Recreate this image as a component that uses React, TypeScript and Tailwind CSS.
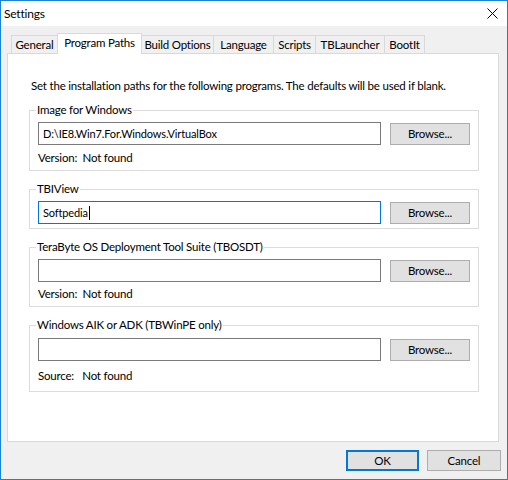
import React from 'react';

const tabs = [
  { label: 'General', w: 'w-[47px]' },
  { label: 'Program Paths', w: 'w-[85px]', active: true },
  { label: 'Build Options', w: 'w-[73px]' },
  { label: 'Language', w: 'w-[61px]' },
  { label: 'Scripts', w: 'w-[43px]' },
  { label: 'TBLauncher', w: 'w-[70px]' },
  { label: 'BootIt', w: 'w-[41px]' },
];

function BrowseButton() {
  return (
    <button className="mt-px ml-[9px] w-[80px] h-[22px] bg-[#e1e1e1] border border-[#adadad] text-black flex items-center justify-center">
      Browse...
    </button>
  );
}

function PathInput({ value, focused }: { value?: string; focused?: boolean }) {
  return (
    <div
      className={`w-[343px] h-[23px] bg-white border flex items-center pl-[4px] ${
        focused ? 'border-[#0078d7]' : 'border-[#7a7a7a]'
      }`}
    >
      <span className="text-[11px] tracking-[-0.15px]">{value}</span>
      {focused && <span className="inline-block w-px h-[14px] bg-black ml-px" />}
    </div>
  );
}

export default function App() {
  return (
    <div
      className="w-[508px] h-[480px] border border-[#1883d7] flex flex-col text-[11.5px] tracking-[-0.2px] leading-4 text-black bg-[#f0f0f0] whitespace-nowrap"
      style={{ fontFamily: 'Lato, "Segoe UI", sans-serif' }}
    >
      {/* title bar */}
      <div className="h-[25px] bg-white flex items-center justify-between pl-[3px] pr-[9px]">
        <span className="text-[12px]">Settings</span>
        <svg width="11" height="11" viewBox="0 0 11 11">
          <path d="M0.5 0.5 L10.5 10.5 M10.5 0.5 L0.5 10.5" stroke="#000" strokeWidth="1" />
        </svg>
      </div>

      <div className="flex-1 flex flex-col px-[6px] pt-[7px]">
        {/* tab strip */}
        <div className="flex items-end h-[20px] pl-[4px]">
          {tabs.map((t, i) =>
            t.active ? (
              <div
                key={t.label}
                className={`${t.w} -ml-px h-[21px] -mb-px relative z-10 bg-white border border-b-0 border-[#d9d9d9] flex items-center justify-center pb-[2px]`}
              >
                {t.label}
              </div>
            ) : (
              <div
                key={t.label}
                className={`${t.w} ${i > 0 ? '-ml-px' : ''} h-[18px] bg-[#f0f0f0] border border-b-0 border-[#d9d9d9] flex items-center justify-center`}
              >
                {t.label}
              </div>
            )
          )}
        </div>

        {/* tab panel */}
        <div className="w-[492px] h-[389px] bg-white border border-[#d9d9d9] pl-[21px] pt-[24px]">
          <p className="ml-[2px]">
            Set the installation paths for the following programs. The defaults will be used if blank.
          </p>

          <fieldset className="mt-[8px] w-[450px] border border-[#dcdcdc] pl-[8px] pb-[4px]">
            <legend className="-ml-[2px] px-[1px]">Image for Windows</legend>
            <div className="flex items-start pt-[4px]">
              <PathInput value="D:\IE8.Win7.For.Windows.VirtualBox" />
              <BrowseButton />
            </div>
            <p className="mt-[5px]">Version:&nbsp; Not found</p>
          </fieldset>

          <fieldset className="mt-[10px] w-[450px] border border-[#dcdcdc] pl-[8px] pb-[4px]">
            <legend className="-ml-[2px] px-[1px]">TBIView</legend>
            <div className="flex items-start pt-[4px]">
              <PathInput value="Softpedia" focused />
              <BrowseButton />
            </div>
          </fieldset>

          <fieldset className="mt-[10px] w-[450px] border border-[#dcdcdc] pl-[8px] pb-[4px]">
            <legend className="-ml-[2px] px-[1px]">TeraByte OS Deployment Tool Suite (TBOSDT)</legend>
            <div className="flex items-start pt-[4px]">
              <PathInput />
              <BrowseButton />
            </div>
            <p className="mt-[4px]">Version:&nbsp; Not found</p>
          </fieldset>

          <fieldset className="mt-[10px] w-[450px] border border-[#dcdcdc] pl-[8px] pb-[7px]">
            <legend className="-ml-[2px] px-[1px]">Windows AIK or ADK (TBWinPE only)</legend>
            <div className="flex items-start pt-[5px]">
              <PathInput />
              <BrowseButton />
            </div>
            <p className="mt-[7px]">Source:&nbsp;&nbsp; Not found</p>
          </fieldset>
        </div>

        {/* dialog buttons */}
        <div className="flex justify-end gap-[8px] mt-[8px]">
          <button className="w-[73px] h-[21px] bg-[#e1e1e1] border-2 border-[#0078d7] flex items-center justify-center">
            OK
          </button>
          <button className="w-[74px] h-[21px] bg-[#e1e1e1] border border-[#adadad] flex items-center justify-center">
            Cancel
          </button>
        </div>
      </div>
    </div>
  );
}
